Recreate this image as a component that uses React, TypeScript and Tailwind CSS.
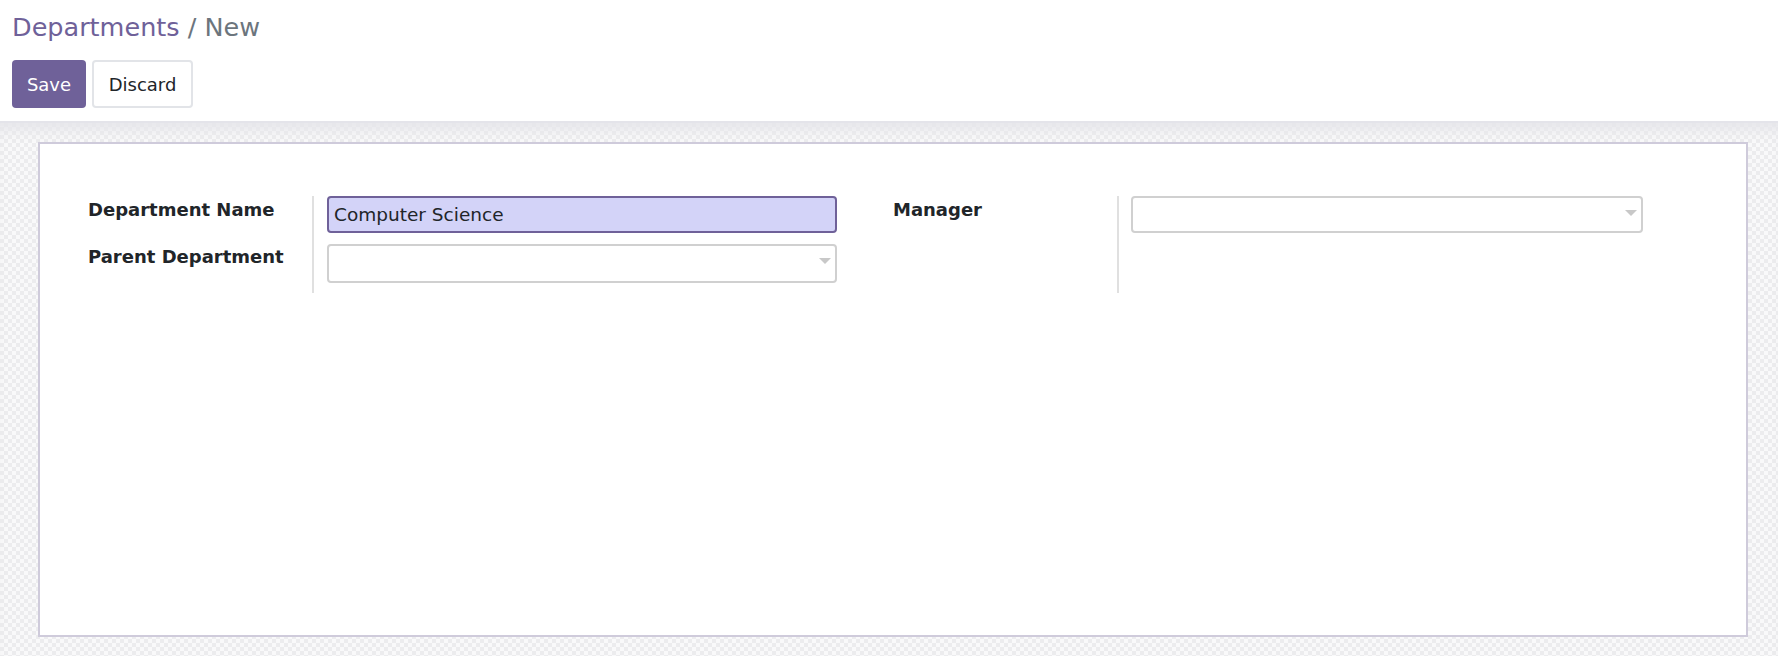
import React from "react";

const font = { fontFamily: '"DejaVu Sans", "Liberation Sans", sans-serif' };

function Caret() {
  return (
    <svg width="12" height="6" viewBox="0 0 12 6" className="absolute right-[4px] top-[12px]">
      <path d="M0 0 L12 0 L6 6 Z" fill="#c8c8c8" />
    </svg>
  );
}

function Label({ children }: { children: React.ReactNode }) {
  return <div className="h-[47px] pt-[2px] text-[18px] font-bold text-[#212529] leading-[24px]">{children}</div>;
}

export default function App() {
  return (
    <div className="w-[1778px] h-[656px] overflow-hidden bg-white flex flex-col" style={font}>
      {/* control panel */}
      <div className="h-[123px] border-b-2 border-[#e4e4ea] px-[12px] pt-[11px] bg-white">
        <div className="text-[25.5px] leading-[32px] h-[49px]">
          <span className="text-[#6f6199]">Departments</span>
          <span className="text-[#6c757d]"> / New</span>
        </div>
        <div className="flex gap-[6px]">
          <button className="h-[48px] w-[74px] rounded-[4px] bg-[#6f6199] text-white text-[18px]">Save</button>
          <button className="h-[48px] w-[101px] rounded-[4px] border-2 border-[#e2e4e8] bg-white text-[#212529] text-[18px]">Discard</button>
        </div>
      </div>

      {/* sheet background */}
      <div className="flex-1 pt-[19px] pl-[38px] pr-[30px] pb-[19px] bg-[#f5f5f6] bg-[repeating-conic-gradient(#ececee_0%_25%,#f9f9fa_0%_50%)] bg-[length:8px_8px] shadow-[inset_0_14px_12px_-6px_rgba(230,230,234,0.95)]">
        <div className="h-full bg-white border-2 border-[#cfcbdb] pl-[48px] pt-[52px] flex">
          {/* group 1 */}
          <div className="w-[805px] flex">
            <div className="w-[224px]">
              <Label>Department Name</Label>
              <Label>Parent Department</Label>
            </div>
            <div className="w-[2px] h-[97px] bg-[#e0e0e0]" />
            <div className="ml-[13px] w-[510px] flex flex-col gap-[11px]">
              <div className="h-[37px] rounded-[4px] border-2 border-[#6f6199] bg-[#d3d3f8] px-[5px] flex items-center text-[18.5px] text-[#212529]">
                Computer Science
              </div>
              <div className="relative h-[39px] rounded-[4px] border-2 border-[#d0d0d0] bg-white">
                <Caret />
              </div>
            </div>
          </div>
          {/* group 2 */}
          <div className="w-[805px] flex">
            <div className="w-[224px]">
              <Label>Manager</Label>
            </div>
            <div className="w-[2px] h-[97px] bg-[#e0e0e0]" />
            <div className="ml-[12px] w-[512px]">
              <div className="relative h-[37px] rounded-[4px] border-2 border-[#d0d0d0] bg-white">
                <Caret />
              </div>
            </div>
          </div>
        </div>
      </div>
    </div>
  );
}
